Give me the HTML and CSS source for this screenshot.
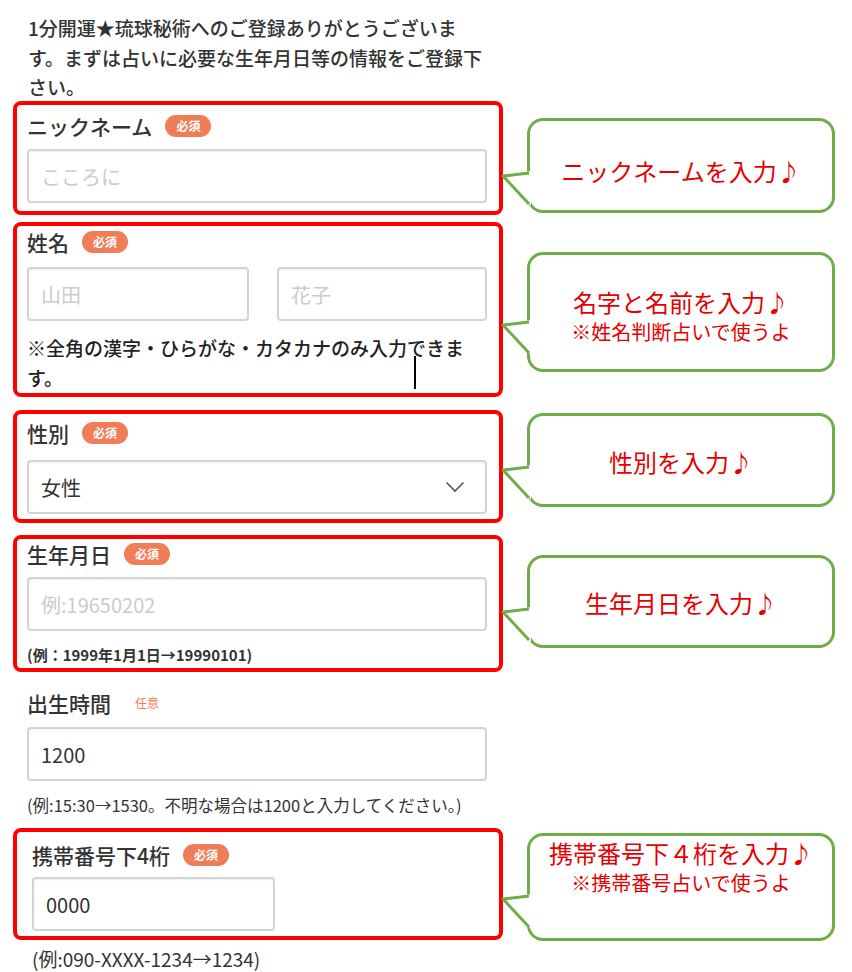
FILE: index.html
```html
<!DOCTYPE html>
<html lang="ja">
  <head>
    <meta charset="UTF-8" />
    <meta name="viewport" content="width=device-width, initial-scale=1.0" />
    <title>1分開運★琉球秘術 | ご登録</title>
    <link rel="stylesheet" href="styles.css">
  </head>
  <body>
    <p class="intro">1分開運★琉球秘術へのご登録ありがとうございます。まずは占いに必要な生年月日等の情報をご登録下さい。</p>

    <!-- ニックネーム -->
    <div class="row">
      <div class="mark field-nick">
        <div class="label">ニックネーム <span class="badge">必須</span></div>
        <input class="input" type="text" placeholder="こころに" />
      </div>
      <div class="bubble bubble-nick">
        <svg class="tail" width="30" height="36" viewBox="0 0 30 36">
          <polygon points="30,0 2,5 30,35" fill="#fff" />
          <polyline points="28,2 2,5 28,33" fill="none" stroke="#70ad47" stroke-width="3" stroke-linejoin="round" />
        </svg>
        <span class="bubble-main">ニックネームを入力♪</span>
      </div>
    </div>

    <!-- 姓名 -->
    <div class="row row-name">
      <div class="mark field-name">
        <div class="label">姓名 <span class="badge">必須</span></div>
        <div class="name-inputs">
          <input class="input" type="text" placeholder="山田" />
          <input class="input" type="text" placeholder="花子" />
        </div>
        <p class="note">※全角の漢字・ひらがな・カタカナのみ入力できます。</p>
        <span class="caret"></span>
      </div>
      <div class="bubble bubble-name">
        <svg class="tail" width="30" height="36" viewBox="0 0 30 36">
          <polygon points="30,0 2,5 30,35" fill="#fff" />
          <polyline points="28,2 2,5 28,33" fill="none" stroke="#70ad47" stroke-width="3" stroke-linejoin="round" />
        </svg>
        <span class="bubble-main">名字と名前を入力♪</span>
        <span class="bubble-sub">※姓名判断占いで使うよ</span>
      </div>
    </div>

    <!-- 性別 -->
    <div class="row row-sex">
      <div class="mark field-sex">
        <div class="label">性別 <span class="badge">必須</span></div>
        <div class="select">
          <span>女性</span>
          <svg width="20" height="12" viewBox="0 0 20 12">
            <polyline points="1.5,1.5 10,10 18.5,1.5" fill="none" stroke="#555" stroke-width="1.6" />
          </svg>
        </div>
      </div>
      <div class="bubble bubble-sex">
        <svg class="tail" width="30" height="36" viewBox="0 0 30 36">
          <polygon points="30,0 2,5 30,35" fill="#fff" />
          <polyline points="28,2 2,5 28,33" fill="none" stroke="#70ad47" stroke-width="3" stroke-linejoin="round" />
        </svg>
        <span class="bubble-main">性別を入力♪</span>
      </div>
    </div>

    <!-- 生年月日 -->
    <div class="row row-birth">
      <div class="mark field-birth">
        <div class="label">生年月日 <span class="badge">必須</span></div>
        <input class="input" type="text" placeholder="例:19650202" />
        <p class="note-small">(例：1999年1月1日→19990101)</p>
      </div>
      <div class="bubble bubble-birth">
        <svg class="tail" width="30" height="36" viewBox="0 0 30 36">
          <polygon points="30,0 2,5 30,35" fill="#fff" />
          <polyline points="28,2 2,5 28,33" fill="none" stroke="#70ad47" stroke-width="3" stroke-linejoin="round" />
        </svg>
        <span class="bubble-main">生年月日を入力♪</span>
      </div>
    </div>

    <!-- 出生時間 -->
    <div class="field-time">
      <div class="label">出生時間 <span class="badge badge-optional">任意</span></div>
      <input class="input" type="text" value="1200" />
      <p class="note-time">(例:15:30→1530。不明な場合は1200と入力してください。)</p>
    </div>

    <!-- 携帯番号 -->
    <div class="row row-phone">
      <div class="mark field-phone">
        <div class="label">携帯番号下4桁 <span class="badge">必須</span></div>
        <input class="input input-short" type="text" value="0000" />
      </div>
      <div class="bubble bubble-phone">
        <svg class="tail" width="30" height="36" viewBox="0 0 30 36">
          <polygon points="30,0 2,5 30,35" fill="#fff" />
          <polyline points="28,2 2,5 28,33" fill="none" stroke="#70ad47" stroke-width="3" stroke-linejoin="round" />
        </svg>
        <span class="bubble-main">携帯番号下４桁を入力♪</span>
        <span class="bubble-sub">※携帯番号占いで使うよ</span>
      </div>
    </div>
    <p class="note-phone">(例:090-XXXX-1234→1234)</p>
  </body>
</html>
```

FILE: styles.css
```css
body {
  font-family: "Noto Sans CJK JP", "Noto Sans", sans-serif;
  margin: 0;
  padding: 0 0 0 13px;
  color: #333;
  background-color: #fff;
  width: 852px;
  box-sizing: border-box;
}
p {
  margin: 0;
}
/* Intro text */
.intro {
  width: 460px;
  padding: 13px 0 0 15px;
  font-size: 19px;
  font-weight: 500;
  line-height: 29.5px;
  height: 88px;
  box-sizing: content-box;
}
/* Rows: form block on the left, speech bubble on the right */
.row {
  display: grid;
  grid-template-columns: 490px 308px;
  column-gap: 24px;
  align-items: start;
}
.row-name {
  margin-top: 7px;
}
.row-sex {
  margin-top: 13px;
}
.row-birth {
  margin-top: 12px;
}
.row-phone {
  margin-top: 11px;
}
/* Red marker boxes */
.mark {
  border: 4px solid #fe0000;
  border-radius: 8px;
  padding: 0 12px 0 10px;
  position: relative;
}
.field-nick {
  padding-top: 6px;
  padding-bottom: 8px;
}
.field-name {
  padding-top: 1px;
}
.field-sex {
  padding-top: 4px;
  padding-bottom: 5px;
}
.field-birth {
  padding-bottom: 1px;
}
.field-phone {
  padding-top: 8px;
  padding-bottom: 5px;
  padding-left: 15px;
}
.field-time {
  width: 460px;
  padding: 16px 16px 0 14px;
}
/* Labels */
.label {
  display: flex;
  align-items: center;
  gap: 13px;
  height: 30px;
  font-size: 21px;
  font-weight: 500;
  color: #333;
  margin-bottom: 8px;
}
.field-name .label {
  margin-bottom: 10px;
}
.field-sex .label {
  margin-bottom: 12px;
}
.field-time .label {
  margin-bottom: 9px;
}
.field-phone .label {
  margin-bottom: 7px;
}
.badge {
  display: inline-block;
  height: 22px;
  line-height: 22px;
  padding: 0 11px;
  border-radius: 11px;
  background-color: #ef7e58;
  color: white;
  font-size: 12px;
  font-weight: bold;
}
.badge-optional {
  background-color: transparent;
  color: #ef7e58;
  font-weight: normal;
}
/* Inputs */
.input,
.select {
  display: block;
  width: 100%;
  height: 54px;
  box-sizing: border-box;
  border: 2px solid #d4d4d4;
  border-radius: 4px;
  padding: 0 12px;
  font-family: inherit;
  font-size: 20px;
  color: #333;
  background-color: white;
  box-shadow: inset 0 1px 2px rgba(0, 0, 0, 0.06);
  outline: none;
}
.input::placeholder {
  color: #cbcbcb;
}
.input-short {
  width: 243px;
}
.name-inputs {
  display: grid;
  grid-template-columns: 222px 1fr;
  column-gap: 28px;
}
.select {
  display: flex;
  align-items: center;
  justify-content: space-between;
  padding-right: 20px;
}
/* Notes */
.note {
  margin-top: 12px;
  font-size: 19px;
  line-height: 30px;
  font-weight: 500;
  color: #222;
}
.note-small {
  margin-top: 12px;
  font-size: 15px;
  line-height: 24px;
  font-weight: bold;
  color: #333;
}
.note-time {
  margin-top: 12px;
  font-size: 16.5px;
  line-height: 24px;
  color: #333;
}
.note-phone {
  margin-top: 6px;
  padding-left: 19px;
  font-size: 19px;
  line-height: 24px;
  color: #333;
}
.caret {
  position: absolute;
  left: 397px;
  top: 130px;
  width: 2px;
  height: 33px;
  background-color: #000;
}
/* Speech bubbles */
.bubble {
  position: relative;
  box-sizing: border-box;
  border: 3px solid #70ad47;
  border-radius: 16px;
  background-color: white;
  display: flex;
  flex-direction: column;
  align-items: center;
  color: #e60000;
}
.tail {
  position: absolute;
  left: -29px;
  top: calc(61.5% - 5px);
}
.bubble-main {
  font-size: 24px;
  line-height: 30px;
}
.bubble-sub {
  font-size: 20px;
  line-height: 30px;
}
.bubble-nick {
  margin-top: 17px;
  height: 95px;
  padding-top: 35px;
}
.bubble-name {
  margin-top: 30px;
  height: 120px;
  padding-top: 32px;
}
.bubble-sex {
  margin-top: 3px;
  height: 94px;
  padding-top: 31px;
}
.bubble-birth {
  margin-top: 20px;
  height: 93px;
  padding-top: 30px;
}
.bubble-phone {
  margin-top: 5px;
  height: 108px;
  padding-top: 2px;
}
```
